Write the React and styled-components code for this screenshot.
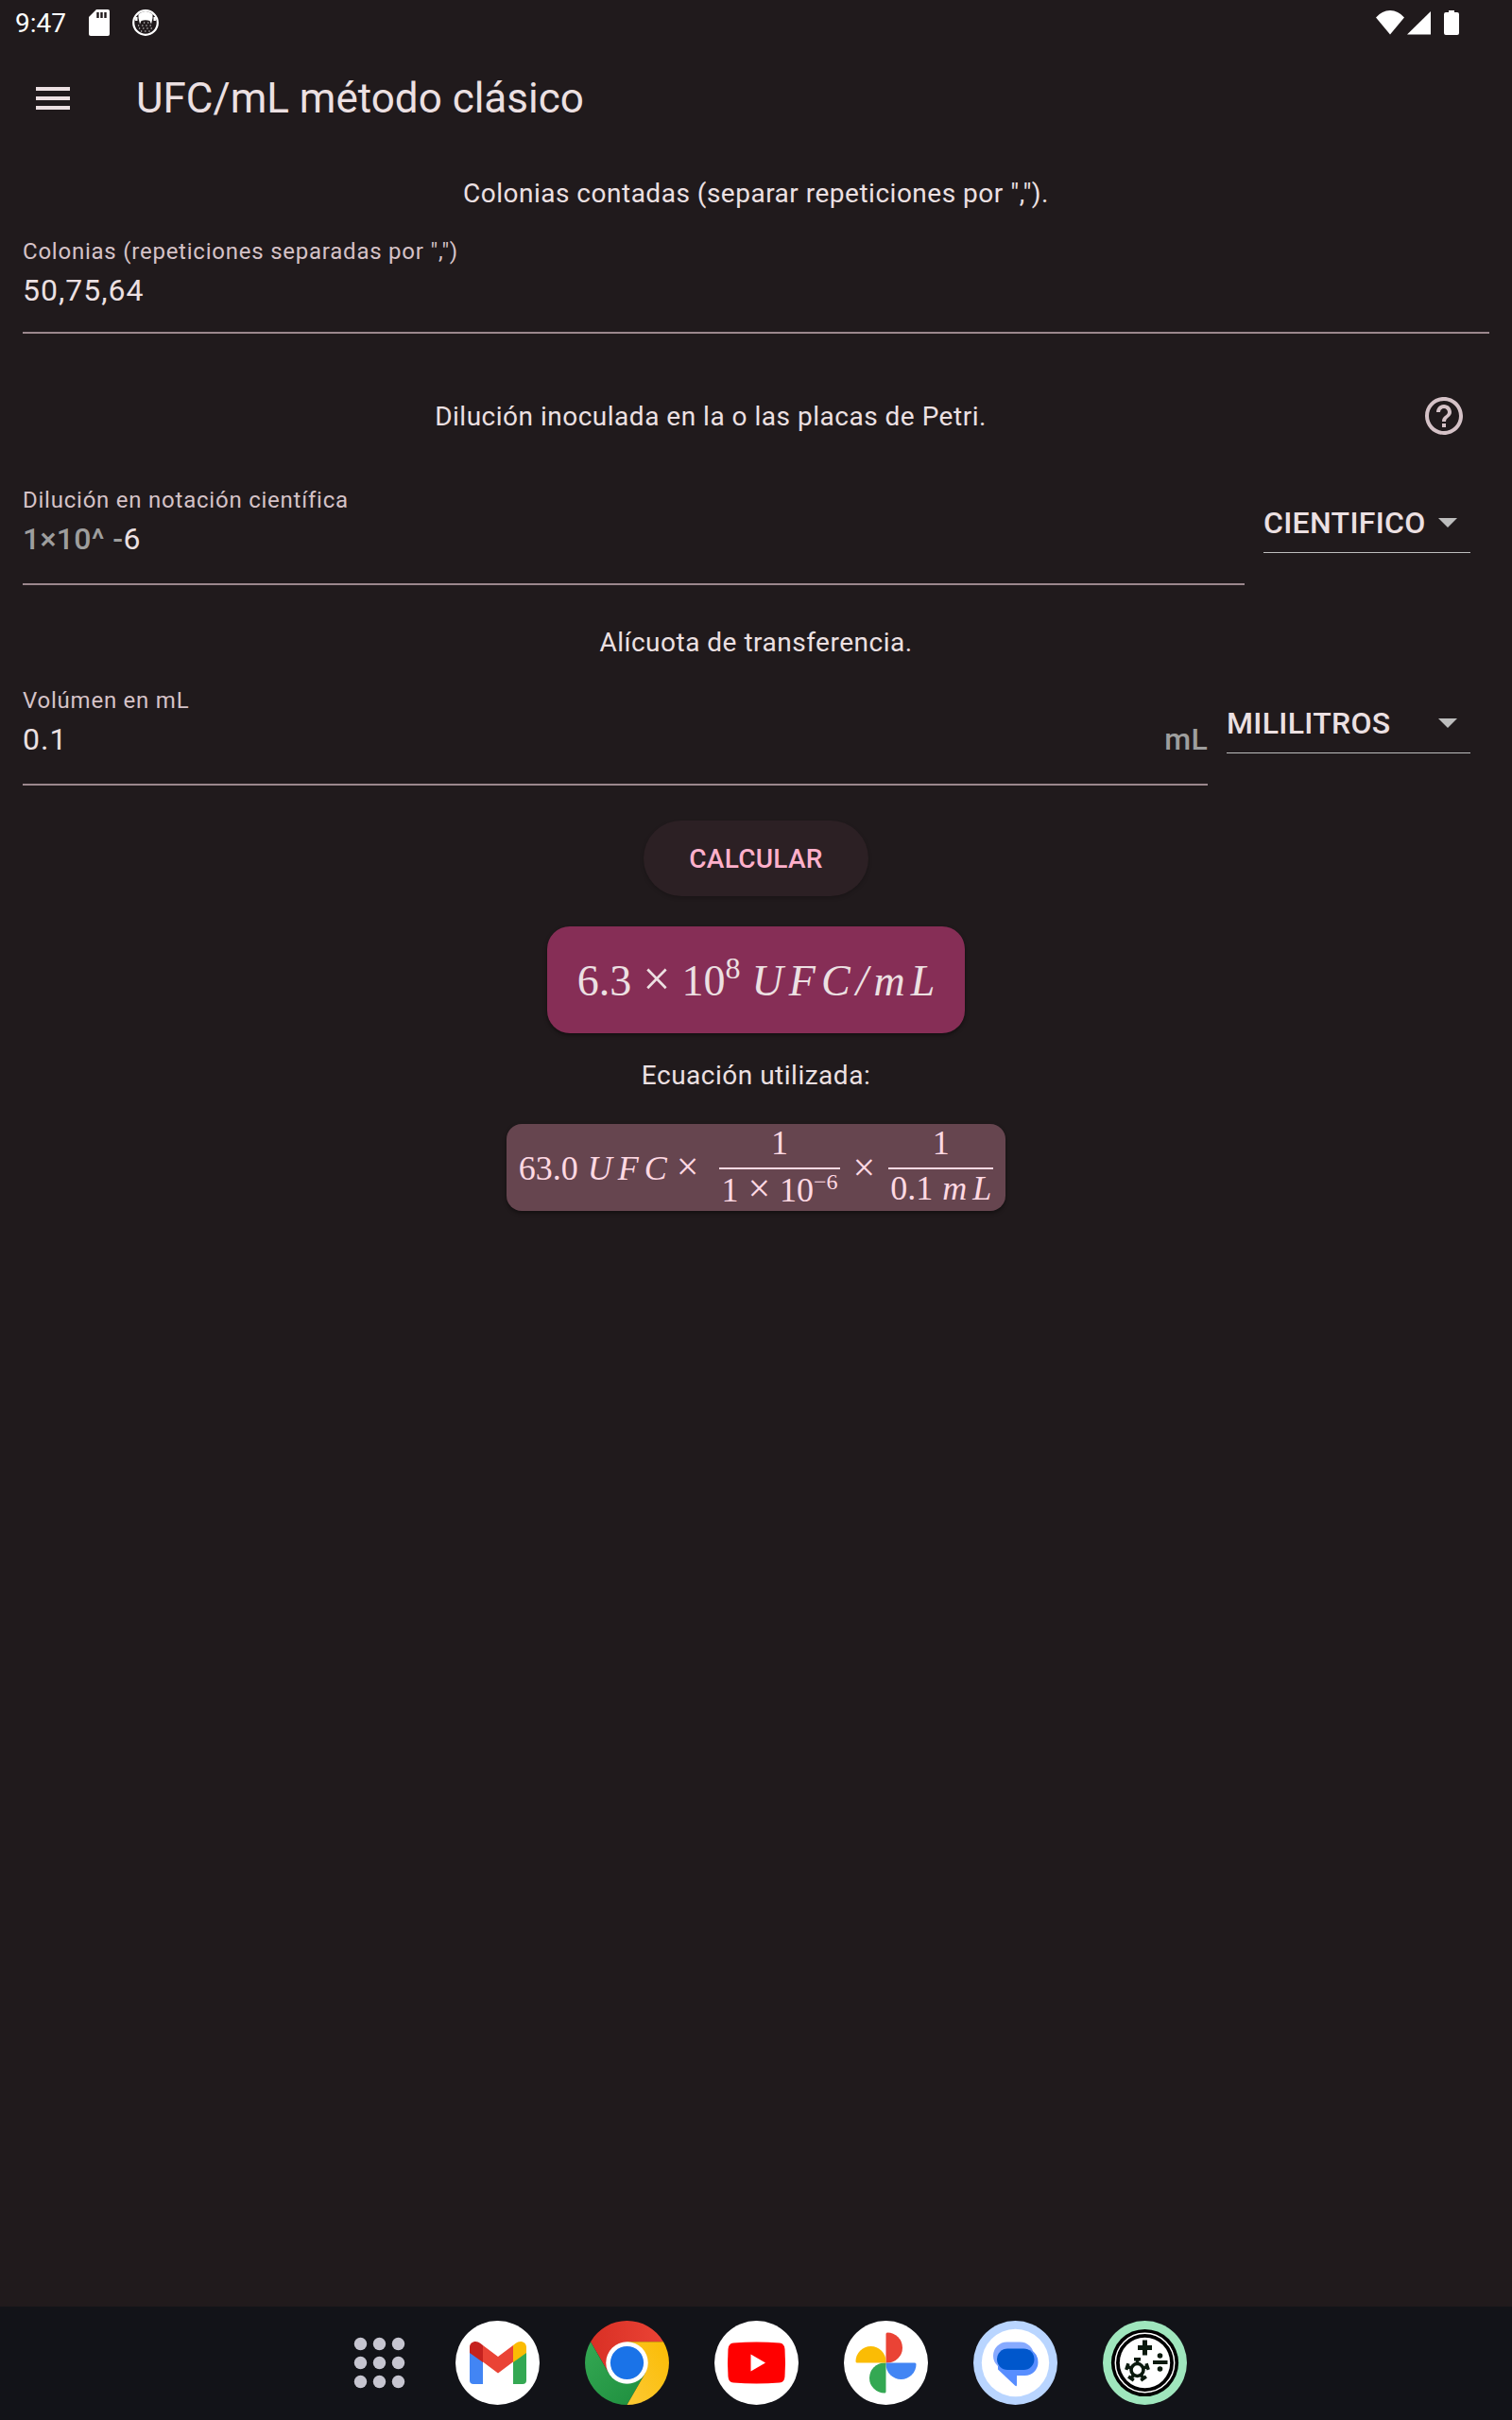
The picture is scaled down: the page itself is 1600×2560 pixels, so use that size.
import React, { useState } from "react";
import styled, { createGlobalStyle, css } from "styled-components";

const GlobalStyle = createGlobalStyle`
  *, *::before, *::after { box-sizing: border-box; }
  body {
    margin: 0;
    background: #201a1c;
    color: #ece0e2;
    font-family: Roboto, "Liberation Sans", sans-serif;
  }
  button, input, select { font: inherit; color: inherit; }
`;

const Screen = styled.div`
  min-height: 100vh;
  display: flex;
  flex-direction: column;
`;

const StatusBar = styled.header`
  height: 48px;
  padding: 0 56px 0 16px;
  display: flex;
  align-items: center;
  justify-content: space-between;
  color: #fff;
  font-size: 28px;
`;

const StatusGroup = styled.div`
  display: flex;
  align-items: center;
  gap: 24px;
  svg { display: block; }
`;

const AppBar = styled.div`
  height: 112px;
  padding: 0 32px;
  display: flex;
  align-items: center;
  gap: 64px;
`;

const IconButton = styled.button`
  width: ${(p) => p.$width || 48}px;
  height: 48px;
  padding: 0;
  border: 0;
  background: none;
  color: ${(p) => p.$color || "#ece0e2"};
  cursor: pointer;
  display: flex;
  justify-content: center;
`;

const Title = styled.h1`
  margin: 0;
  font-size: 44px;
  line-height: 56px;
  font-weight: 400;
`;

const Main = styled.main`
  flex: 1;
  padding: 25px 24px 0;
`;

const Caption = styled.p`
  margin: ${(p) => p.$top || 0}px 0 0;
  text-align: center;
  font-size: 28px;
  line-height: 40px;
  letter-spacing: 0.018em;
`;

const HelpRow = styled.div`
  height: 96px;
  margin-top: 39px;
  display: grid;
  grid-template-columns: 1fr 96px;
  align-items: center;
`;

const FormRow = styled.div`
  display: flex;
  align-items: flex-start;
  gap: 20px;
  margin-top: ${(p) => (p.$withUnit ? 25 : 25)}px;
  padding-right: ${(p) => (p.$withUnit ? 20 : 0)}px;
`;

const Field = styled.div`
  flex: 1;
  min-width: 0;
  height: ${(p) => (p.$tall ? 106 : 103)}px;
  border-bottom: 2px solid #9b878d;
`;

const FieldLabel = styled.label`
  display: block;
  font-size: 24px;
  line-height: 32px;
  letter-spacing: 0.032em;
  color: #d5c2c7;
`;

const InputLine = styled.div`
  display: flex;
  align-items: center;
  height: 40px;
  margin-top: 5px;
  font-size: 32px;
  line-height: 40px;
`;

const Affix = styled.span`
  color: #9e9e9e;
  font-weight: 500;
  letter-spacing: 0.01em;
  white-space: pre;
`;

const TextInput = styled.input`
  flex: 1;
  min-width: 0;
  height: 40px;
  padding: 0;
  border: 0;
  outline: 0;
  background: none;
  letter-spacing: 1px;
`;

const SelectBox = styled.div`
  width: ${(p) => p.$width}px;
  height: 64px;
  margin-top: 8px;
  padding-right: 14px;
  display: flex;
  align-items: center;
  border-bottom: 1px solid #bdbdbd;
`;

const Select = styled.select`
  flex: 1;
  min-width: 0;
  height: 40px;
  padding: 0;
  border: 0;
  outline: 0;
  appearance: none;
  background: #201a1c;
  font-size: 32px;
  line-height: 40px;
  font-weight: 500;
  letter-spacing: 0.01em;
`;

const Results = styled.section`
  margin-top: 37px;
  display: flex;
  flex-direction: column;
  align-items: center;
`;

const CalcButton = styled.button`
  height: 80px;
  padding: 0 48px;
  border: 0;
  border-radius: 40px;
  background: #2c2024;
  color: #ffb0cb;
  font-size: 28px;
  font-weight: 500;
  letter-spacing: 0.01em;
  box-shadow: 0 2px 4px rgba(0, 0, 0, 0.2);
  cursor: pointer;
`;

const Card = styled.div`
  display: flex;
  align-items: center;
  justify-content: center;
  box-shadow: 0 2px 4px rgba(0, 0, 0, 0.45);
  font-family: "Liberation Serif", serif;
  ${(p) =>
    p.$main
      ? css`
          min-width: 442px;
          height: 113px;
          margin: 32px 0 25px;
          border-radius: 24px;
          background: #862e56;
          font-size: 46px;
          line-height: 56px;
        `
      : css`
          min-width: 528px;
          height: 92px;
          margin-top: 31px;
          border-radius: 16px;
          background: #66454f;
          color: #ffd9e3;
          font-size: 36px;
          line-height: 40px;
        `}
`;

const MathRow = styled.span`
  display: inline-flex;
  align-items: ${(p) => (p.$centered ? "center" : "baseline")};
  gap: ${(p) => p.$gap}px;
`;

const Vars = styled.i`
  display: inline-flex;
  gap: 6px;
`;

const Times = styled.span`
  font-size: ${(p) => p.$size}px;
`;

const Sup = styled.sup`
  font-size: ${(p) => p.$size}px;
  line-height: 0;
  vertical-align: 0.55em;
`;

const Fraction = styled.span`
  display: inline-flex;
  flex-direction: column;
  align-items: center;
`;

const Numerator = styled.span`
  align-self: stretch;
  height: 48px;
  text-align: center;
  border-bottom: 2px solid #ffd9e3;
`;

const Denominator = styled.span`
  height: 44px;
  padding: 0 2px;
`;

const Dock = styled.nav`
  height: 120px;
  padding: 15px 0 0 13px;
  display: flex;
  align-items: flex-start;
  justify-content: center;
  gap: 48px;
  background: #121318;
`;

const DockButton = styled.button`
  width: 89px;
  height: 89px;
  padding: 0;
  border: 0;
  border-radius: 50%;
  background: none;
  cursor: pointer;
  margin-right: ${(p) => (p.$launcher ? -12 : 0)}px;
  svg { display: block; }
`;

const Letters = ({ text }) => (
  <Vars>
    {text.split("").map((c, i) => (
      <span key={i}>{c}</span>
    ))}
  </Vars>
);

const SdCard = () => (
  <svg width="22" height="28" viewBox="0 0 22 28">
    <path fill="#fff" d="M8 0H20a2 2 0 0 1 2 2V26a2 2 0 0 1-2 2H2a2 2 0 0 1-2-2V8Z" />
    <path stroke="#201a1c" strokeWidth="2.4" d="M9.500 3v6M13.500 3v6M17.500 3v6" />
  </svg>
);

const Cat = () => (
  <svg width="28" height="28" viewBox="0 0 28 28">
    <circle cx="14" cy="14" r="12.800" fill="none" stroke="#fff" strokeWidth="2.200" />
    <path fill="#fff" d="M6.500 5Q14-1 21.500 5V9L20 15.500 18.500 12Q14 10.500 9.500 12L8 15.500 6.500 9Z" />
    <path fill="none" stroke="#fff" strokeWidth="2.400" d="M4.300 8v4M23.700 8v4" />
    <path fill="none" stroke="#fff" strokeDasharray="1.200 3" d="M6 17h16M12 14h6M7 20h15M9 23h11" />
  </svg>
);

const StatusIcons = () => (
  <svg width="88" height="26" viewBox="0 0 88 26" fill="#fff">
    <path d="M0 7.500Q6.500 0 15 0T30 7.500L15 25.500Z" />
    <path d="M58 1v24.500H33Z" />
    <path d="M77 0h6v2h3a2 2 0 0 1 2 2v20a2 2 0 0 1-2 2H74a2 2 0 0 1-2-2V4a2 2 0 0 1 2-2h3Z" />
  </svg>
);

const Menu = () => (
  <svg width="48" height="48" viewBox="0 0 24 24" fill="currentColor">
    <path d="M3 18h18v-2H3v2zm0-5h18v-2H3v2zm0-7v2h18V6H3z" />
  </svg>
);

const Help = () => (
  <svg width="48" height="48" viewBox="0 0 24 24" fill="currentColor">
    <path d="M11 18h2v-2h-2v2zm1-16C6.480 2 2 6.480 2 12s4.480 10 10 10 10-4.480 10-10S17.520 2 12 2zm0 18c-4.410 0-8-3.590-8-8s3.590-8 8-8 8 3.590 8 8-3.590 8-8 8zm0-14c-2.210 0-4 1.790-4 4h2c0-1.100.9-2 2-2s2 .9 2 2c0 2-3 1.750-3 5h2c0-2.250 3-2.500 3-5 0-2.210-1.790-4-4-4z" />
  </svg>
);

const Arrow = () => (
  <svg width="20" height="10" viewBox="0 0 20 10" aria-hidden="true">
    <path fill="#bdbdbd" d="M0 0h20L10 10Z" />
  </svg>
);

const Launcher = () => (
  <svg width="89" height="89" viewBox="0 0 89 89" fill="#c6c5d0">
    {[24.5, 44.5, 64.5].map((y) =>
      [24.5, 44.5, 64.5].map((x) => <circle key={`${x}-${y}`} cx={x} cy={y} r="6.700" />)
    )}
  </svg>
);

const Gmail = () => (
  <svg width="89" height="89" viewBox="0 0 89 89">
    <circle cx="44.5" cy="44.5" r="44.5" fill="#fff" />
    <path fill="#4285f4" d="M15 33 29 43V67H19a4 4 0 0 1-4-4Z" />
    <path fill="#34a853" d="M61 43 75 33V63a4 4 0 0 1-4 4H61Z" />
    <path fill="#ea4335" d="M29 26 45 38 61 26V43.500L45 55.500 29 43.500Z" />
    <path fill="#c5221f" d="M15 34V28c0-6 7-8 11.500-4L29 26V44Z" />
    <path fill="#fbbc04" d="M75 34V28c0-6-7-8-11.500-4L61 26V44Z" />
  </svg>
);

const Chrome = () => (
  <svg width="89" height="89" viewBox="0 0 89 89">
    <defs>
      <linearGradient id="chrome-red" x1="0" x2="1"><stop stopColor="#d93025" /><stop offset="1" stopColor="#ea4335" /></linearGradient>
      <linearGradient id="chrome-yellow" x1="1" y1="0" x2="0" y2="1"><stop stopColor="#fbbc04" /><stop offset="1" stopColor="#fcc934" /></linearGradient>
      <linearGradient id="chrome-green" x1="0" y1="0" x2="1" y2="1"><stop stopColor="#34a853" /><stop offset="1" stopColor="#1e8e3e" /></linearGradient>
    </defs>
    <path fill="url(#chrome-red)" d="M6 22.250A44.500 44.500 0 0 1 83 22.250H44.500L25.230 55.600Z" />
    <path fill="url(#chrome-green)" d="M6 22.250 25.230 55.600 44.500 66.750 63.770 55.600 44.500 89A44.500 44.500 0 0 1 6 22.250Z" />
    <path fill="url(#chrome-yellow)" d="M83 22.250A44.500 44.500 0 0 1 44.500 89L63.770 55.600 44.500 22.250Z" />
    <circle cx="44.5" cy="44.5" r="22.250" fill="#fff" />
    <circle cx="44.5" cy="44.5" r="17.600" fill="#1a73e8" />
  </svg>
);

const YouTube = () => (
  <svg width="89" height="89" viewBox="0 0 89 89">
    <circle cx="44.5" cy="44.5" r="44.5" fill="#fff" />
    <path fill="#f00" d="M20 23.500Q44.500 21.500 69 23.500 74 24 74.500 30 75.500 44.500 74.500 59 74 65 69 65.500 44.500 67.500 20 65.500 15 65 14.500 59 13.500 44.500 14.500 30 15 24 20 23.500Z" />
    <path fill="#fff" d="M38.500 35.500 54 44.500 38.500 53.500Z" />
  </svg>
);

const Photos = () => (
  <svg width="89" height="89" viewBox="0 0 89 89">
    <circle cx="44.5" cy="44.5" r="44.5" fill="#fff" />
    <path fill="#ea4335" d="M44.500 44.500V14Q44.500 12.500 46 12.500A16 16 0 0 1 46 44.500Z" />
    <path fill="#4285f4" d="M44.500 44.500H75Q76.500 44.500 76.500 46A16 16 0 0 1 44.500 46Z" />
    <path fill="#34a853" d="M44.500 44.500V75Q44.500 76.500 43 76.500A16 16 0 0 1 43 44.500Z" />
    <path fill="#fbbc04" d="M44.500 44.500H14Q12.500 44.500 12.500 43A16 16 0 0 1 44.500 43Z" />
  </svg>
);

const Messages = () => (
  <svg width="89" height="89" viewBox="0 0 89 89">
    <circle cx="44.5" cy="44.5" r="44.5" fill="#b9d5ff" />
    <circle cx="44.5" cy="44.5" r="35.700" fill="#fff" />
    <rect x="21" y="22.500" width="43" height="29" rx="14.500" fill="#87aaff" />
    <path fill="#588eff" d="M26 51.500V48L60 30.500Q68.500 34.500 68.500 44A14 14 0 0 1 54.500 58H46V68Q46 70 44 68.500Z" />
    <rect x="25" y="29.500" width="39.500" height="22.500" rx="11.250" fill="#0057cc" />
  </svg>
);

const Calculator = () => (
  <svg width="89" height="89" viewBox="0 0 89 89">
    <circle cx="44.5" cy="44.5" r="44.5" fill="#9fe6bd" />
    <circle cx="44.5" cy="44.5" r="35.600" fill="#000" />
    <circle cx="44.5" cy="44.5" r="31.200" fill="#000" stroke="#fff" strokeWidth="1.500" />
    <circle cx="44.5" cy="44.5" r="26.700" fill="#fff" />
    <path stroke="#0b1a0e" strokeWidth="5" d="M44.500 20.500v16M37 28.500h15" />
    <path stroke="#0b1a0e" strokeWidth="4" d="M53 44h15.500" />
    <circle cx="60.5" cy="37" r="2.800" fill="#0b1a0e" />
    <circle cx="60.5" cy="51" r="2.800" fill="#0b1a0e" />
    <g transform="translate(36.500 52)" stroke="#0b1a0e" fill="none">
      <circle r="6.500" strokeWidth="3.600" />
      {[0, 72, 144, 216, 288].map((a) => (
        <path key={a} transform={`rotate(${a})`} strokeWidth="3.500" d="M0-6.500V-11M-3.500-11.200H3.500" />
      ))}
    </g>
  </svg>
);

const APPS = [
  ["Gmail", Gmail],
  ["Chrome", Chrome],
  ["YouTube", YouTube],
  ["Fotos", Photos],
  ["Mensajes", Messages],
  ["Calculadora", Calculator],
];

const UnitSelect = ({ label, width, value }) => (
  <SelectBox $width={width}>
    <Select aria-label={label} defaultValue={value}>
      <option>{value}</option>
    </Select>
    <Arrow />
  </SelectBox>
);

export default function App() {
  const [colonies, setColonies] = useState("50,75,64");
  const [dilution, setDilution] = useState("6");
  const [volume, setVolume] = useState("0.1");

  return (
    <>
      <GlobalStyle />
      <Screen>
        <StatusBar>
          <StatusGroup>
            <span>9:47</span>
            <SdCard />
            <Cat />
          </StatusGroup>
          <StatusIcons />
        </StatusBar>
        <AppBar>
          <IconButton aria-label="Menú"><Menu /></IconButton>
          <Title>UFC/mL método clásico</Title>
        </AppBar>

        <Main>
          <Caption>Colonias contadas (separar repeticiones por ",").</Caption>
          <FormRow>
            <Field>
              <FieldLabel htmlFor="colonies">Colonias (repeticiones separadas por ",")</FieldLabel>
              <InputLine>
                <TextInput id="colonies" value={colonies} onChange={(e) => setColonies(e.target.value)} />
              </InputLine>
            </Field>
          </FormRow>

          <HelpRow>
            <Caption $top={1}>Dilución inoculada en la o las placas de Petri.</Caption>
            <IconButton $width={96} $color="#d5c2c7" aria-label="Ayuda"><Help /></IconButton>
          </HelpRow>
          <FormRow $withUnit>
            <Field $tall>
              <FieldLabel htmlFor="dilution">Dilución en notación científica</FieldLabel>
              <InputLine>
                <Affix>1×10^ -</Affix>
                <TextInput id="dilution" value={dilution} onChange={(e) => setDilution(e.target.value)} />
              </InputLine>
            </Field>
            <UnitSelect label="Notación" width={219} value="CIENTIFICO" />
          </FormRow>

          <Caption $top={41}>Alícuota de transferencia.</Caption>
          <FormRow $withUnit>
            <Field $tall>
              <FieldLabel htmlFor="volume">Volúmen en mL</FieldLabel>
              <InputLine>
                <TextInput id="volume" value={volume} onChange={(e) => setVolume(e.target.value)} />
                <Affix>mL</Affix>
              </InputLine>
            </Field>
            <UnitSelect label="Unidad" width={258} value="MILILITROS" />
          </FormRow>

          <Results>
            <CalcButton>CALCULAR</CalcButton>
            <Card $main>
              <MathRow $gap={12}>
                <span>6.3</span>
                <Times $size={52}>×</Times>
                <span>10<Sup $size={32}>8</Sup></span>
                <Letters text="UFC/mL" />
              </MathRow>
            </Card>
            <Caption>Ecuación utilizada:</Caption>
            <Card>
              <MathRow $gap={22} $centered>
                <MathRow $gap={10}>
                  <span>63.0</span>
                  <Letters text="UFC" />
                  <Times $size={42}>×</Times>
                </MathRow>
                <MathRow $gap={14} $centered>
                  <Fraction>
                    <Numerator>1</Numerator>
                    <Denominator>
                      <MathRow $gap={10}>
                        <span>1</span>
                        <Times $size={42}>×</Times>
                        <span>10<Sup $size={24}>−6</Sup></span>
                      </MathRow>
                    </Denominator>
                  </Fraction>
                  <Times $size={42}>×</Times>
                  <Fraction>
                    <Numerator>1</Numerator>
                    <Denominator>
                      <MathRow $gap={10}>
                        <span>0.1</span>
                        <Letters text="mL" />
                      </MathRow>
                    </Denominator>
                  </Fraction>
                </MathRow>
              </MathRow>
            </Card>
          </Results>
        </Main>

        <Dock>
          <DockButton $launcher aria-label="Aplicaciones"><Launcher /></DockButton>
          {APPS.map(([name, Icon]) => (
            <DockButton key={name} aria-label={name}><Icon /></DockButton>
          ))}
        </Dock>
      </Screen>
    </>
  );
}
